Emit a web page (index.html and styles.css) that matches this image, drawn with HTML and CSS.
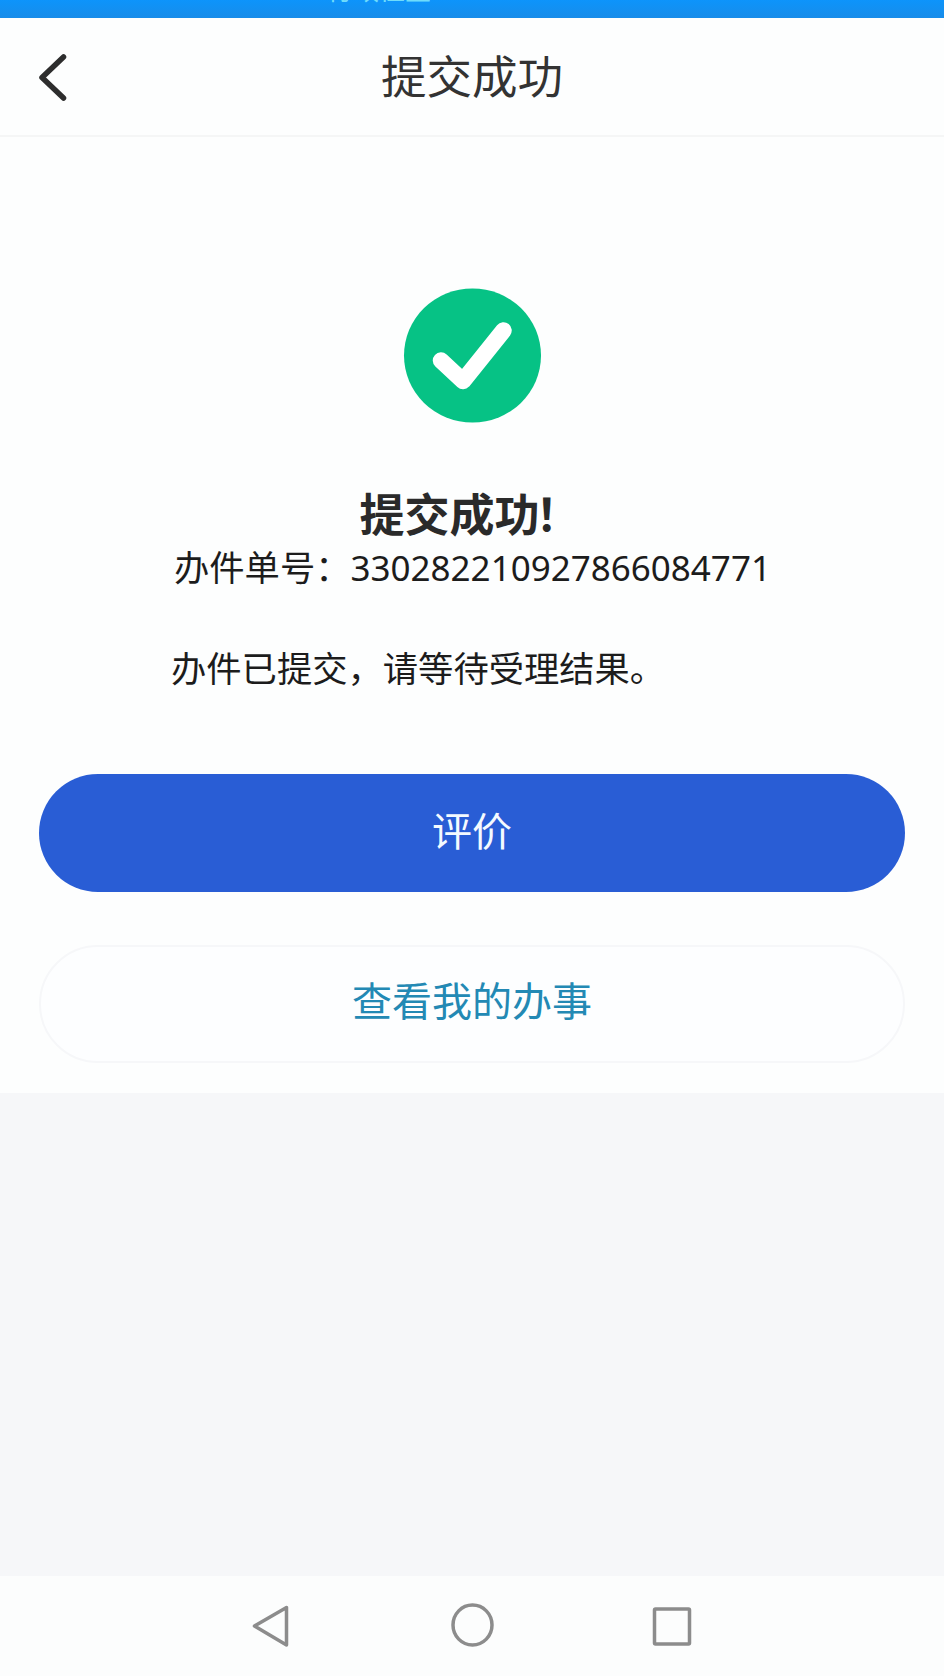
FILE: index.html
```html
<!DOCTYPE html>
<html lang="zh-CN">
<head>
  <meta charset="UTF-8">
  <meta name="viewport" content="width=device-width, initial-scale=1.0">
  <title>提交成功</title>
  <link rel="stylesheet" href="styles.css">
</head>
<body>
  <div class="status-bar"><span>行政位置</span></div>

  <header class="header">
    <a href="#" class="back">
      <svg width="30" height="48" viewBox="0 0 30 48"><path d="M25.500 4 L4 24.500 L25.500 45" /></svg>
    </a>
    <h1>提交成功</h1>
  </header>

  <main class="result">
    <svg class="success-icon" width="138" height="136" viewBox="0 0 138 136">
      <ellipse cx="69.500" cy="68.500" rx="68.500" ry="67" />
      <path d="M38 73.500 L60 94 L100.500 43.500" />
    </svg>
    <h2>提交成功<span class="mark">！</span></h2>
    <p class="order">办件单号：<span class="number">330282210927866084771</span></p>
    <p class="message">办件已提交，请等待受理结果。</p>
    <button class="btn btn-primary">评价</button>
    <button class="btn btn-plain">查看我的办事</button>
  </main>

  <nav class="nav-bar">
    <svg width="44" height="48" viewBox="0 0 44 48"><path d="M4.500 24 L36.500 5.500 V43 Z" /></svg>
    <svg width="44" height="48" viewBox="0 0 44 48"><ellipse cx="22.500" cy="23" rx="19.500" ry="20" /></svg>
    <svg width="44" height="48" viewBox="0 0 44 48"><rect x="4.500" y="7" width="35" height="35" rx="1" /></svg>
  </nav>
</body>
</html>
```
FILE: styles.css
```css
* {
  box-sizing: border-box;
}

body {
  margin: 0;
  height: 1676px;
  display: flex;
  flex-direction: column;
  overflow: hidden;
  background-color: #f6f7f9;
  font-family: "Noto Sans CJK SC", sans-serif;
  color: #1c1c1c;
}

h1, h2, p {
  margin: 0;
}

.status-bar {
  height: 18px;
  flex: none;
  overflow: hidden;
  background: linear-gradient(#0d94fb, #188ce9);
  color: #6fdcfb;
  font-size: 26px;
  line-height: 26px;
}

/* scrolled up, only the feet of the text stay visible */
.status-bar span {
  display: block;
  margin: -24px 0 0 327px;
}

.header {
  height: 119px;
  flex: none;
  display: grid;
  grid-template-columns: 100px 1fr 100px;
  align-items: center;
  background-color: #fdfefe;
  border-bottom: 2px solid #f5f6f6;
}

.back {
  display: flex;
  padding-left: 38px;
}

.back path {
  fill: none;
  stroke: #2d2d2d;
  stroke-width: 5.500;
  stroke-linecap: round;
  stroke-linejoin: round;
}

.header h1 {
  padding-bottom: 6px;
  font-size: 45.500px;
  font-weight: 400;
  line-height: 60px;
  text-align: center;
  color: #333;
}

.result {
  height: 956px;
  flex: none;
  display: flex;
  flex-direction: column;
  align-items: center;
  padding: 150px 39px 0;
  background-color: #fdfefe;
}

.success-icon {
  flex: none;
}

.success-icon ellipse {
  fill: #06c285;
}

.success-icon path {
  fill: none;
  stroke: #fff;
  stroke-width: 16.500;
  stroke-linecap: round;
  stroke-linejoin: round;
}

.result h2 {
  margin-top: 62px;
  font-size: 45px;
  line-height: 56px;
  color: #2a2a2a;
}

.mark {
  margin: 0 4px 0 -4px;
}

.order {
  align-self: flex-start;
  margin-left: 135px;
  font-size: 35.300px;
  line-height: 50px;
  white-space: nowrap;
}

.number {
  font-family: "Noto Sans", sans-serif;
  font-size: 35px;
}

.message {
  align-self: flex-start;
  margin: 49px 0 0 132px;
  font-size: 35.300px;
  line-height: 50px;
}

.btn {
  width: 866px;
  height: 118px;
  flex: none;
  border: none;
  border-radius: 59px;
  padding: 0 0 8px;
  font-family: inherit;
  font-size: 40px;
}

.btn-primary {
  margin-top: 82px;
  background-color: #295dd5;
  color: #f4faff;
}

.btn-plain {
  margin-top: 53px;
  padding-bottom: 10px;
  background-color: #fdfeff;
  border: 2px solid #f6f7f9;
  color: #2389b4;
}

.nav-bar {
  height: 100px;
  margin-top: auto;
  display: flex;
  justify-content: center;
  gap: 156px;
  padding-top: 26px;
  background-color: #fcfdfd;
}

.nav-bar svg * {
  fill: none;
  stroke: #8c8c8c;
  stroke-width: 3.500;
  stroke-linejoin: round;
}
```
